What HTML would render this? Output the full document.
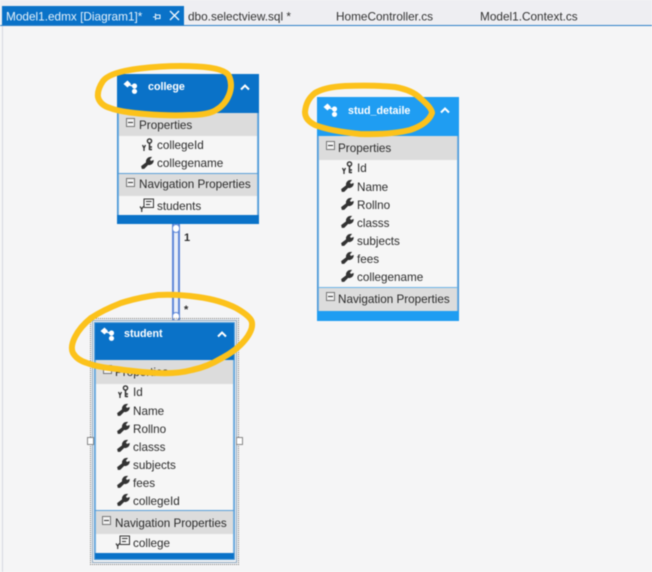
<!DOCTYPE html>
<html>
<head>
<meta charset="utf-8">
<style>
html,body{margin:0;padding:0;background:#f5f5f6}
#p{position:relative;width:652px;height:572px;overflow:hidden;background:#f5f5f6;font-family:"Liberation Sans",sans-serif;filter:blur(.4px)}
#p div{position:absolute;box-sizing:border-box}
.t{font-size:11.7px;line-height:16px;color:#2b2b2b;white-space:nowrap;transform:translateY(1px)}
.tab{font-size:11.8px;line-height:16px;color:#333;white-space:nowrap;top:8px;transform:translateY(.5px)}
.h{font-weight:bold;font-size:10.7px;line-height:14px;color:#fff;white-space:nowrap}
.s{background:#dcdcdc}
.m{width:9px;height:9px;border:1px solid #777;background:#f2f2f2}
.m:after{content:"";position:absolute;left:1px;top:3px;width:5px;height:1px;background:#333}
svg{position:absolute;overflow:visible}
</style>
</head>
<body>
<div id="p">
<svg width="0" height="0" style="left:0;top:0">
<defs>
<symbol id="w" viewBox="0 0 12 12"><path d="M1 11.5 L0.5 9.5 L5 6 C4.5 3.5 6.5 1 9.5 1.2 L7.8 3.2 L9 5 L11.4 4.2 C11.2 7 8.5 8.6 6.5 7.8 L2.8 11.5 Z" fill="#333" stroke="#333" stroke-width=".7"/></symbol>
<symbol id="k" viewBox="0 0 14 14"><circle cx="8.5" cy="3" r="2.1" fill="none" stroke="#333" stroke-width="1.4"/><path d="M8.5 5 V12 M8.5 9 H11 M8.5 11.5 H11" fill="none" stroke="#333" stroke-width="1.5"/><path d="M1.5 7 L3 10 L4.5 7 M3 9 V13" fill="none" stroke="#333" stroke-width="1.3"/></symbol>
<symbol id="n" viewBox="0 0 16 14"><path d="M5 9.5 V1 H14.5 V9.5 H5" fill="#f5f5f5" stroke="#333" stroke-width="1"/><path d="M7 3.5 H12.5 M7 6.5 H11" stroke="#333" stroke-width="1"/><path d="M1 8.5 L2.7 11 L4.4 8.5 M2.7 10 V14" fill="none" stroke="#333" stroke-width="1.2"/></symbol>
<symbol id="e" viewBox="0 0 16 14"><path d="M0.5 4 L4.5 0.5 L8 4 L4.5 7.5 Z" fill="#fff"/><circle cx="11.5" cy="6" r="2.6" fill="#fff"/><circle cx="11.5" cy="11.3" r="2.6" fill="#fff"/><path d="M6 5 L10 6" stroke="#fff" stroke-width="1.4"/></symbol>
<symbol id="c" viewBox="0 0 10 7"><path d="M1 5.5 L5 1.5 L9 5.5" fill="none" stroke="#fff" stroke-width="2"/></symbol>
</defs>
</svg>

<!-- tab strip -->
<div style="left:0;top:0;width:652px;height:25px;background:#eeeef2"></div>
<div style="left:2px;top:6px;width:182px;height:20px;background:#0a72c8"></div>
<div style="left:0;top:25px;width:652px;height:1px;background:#2d80c8"></div>
<div style="left:2px;top:26px;width:1px;height:546px;background:#d6d8e0"></div>
<div class="tab" style="left:6px;color:#e6f2fb">Model1.edmx [Diagram1]*</div>
<svg style="left:152px;top:12px" width="10" height="10" viewBox="0 0 10 10"><path d="M3.5 1.5 V8 M3.5 3 H8 V6.5 H3.5 M1 5 H3.5" fill="none" stroke="#e6f2fb" stroke-width="1.1"/></svg>
<svg style="left:169px;top:10px" width="11" height="11" viewBox="0 0 11 11"><path d="M1 1 L10 10 M10 1 L1 10" stroke="#eef6fc" stroke-width="1.4"/></svg>
<div class="tab" style="left:188px">dbo.selectview.sql *</div>
<div class="tab" style="left:336px">HomeController.cs</div>
<div class="tab" style="left:480px">Model1.Context.cs</div>

<!-- connector -->
<div style="left:172px;top:224px;width:8px;height:97px;background:#e8eef8;border-left:2px solid #5f88d8;border-right:2px solid #5f88d8"></div>
<div style="left:172px;top:224px;width:8px;height:9px;border:1.5px solid #5f88d8;border-radius:4px;background:#fff"></div>
<div style="left:172px;top:312px;width:8px;height:9px;border:1.5px solid #5f88d8;border-radius:4px;background:#fff"></div>
<div class="t" style="left:184px;top:230px;font-size:11px;font-weight:bold;line-height:14px">1</div>
<div class="t" style="left:184px;top:302px;font-size:11px;font-weight:bold;line-height:14px">*</div>

<!-- college -->
<div style="left:117px;top:74px;width:142px;height:150px;background:#0a72c8"></div>
<div style="left:117px;top:113px;width:142px;height:102px;background:#3c8fd4"></div>
<div style="left:118px;top:113px;width:140px;height:102px;background:#f6f6f6;border-left:1px solid #7ab4e2;border-right:1px solid #7ab4e2"></div>
<div style="left:119px;top:113px;width:138px;height:23px" class="s"></div>
<div style="left:118px;top:173px;width:140px;height:1px;background:#5a9fd8"></div>
<div style="left:119px;top:174px;width:138px;height:22px" class="s"></div>
<svg style="left:123px;top:80px" width="16" height="14"><use href="#e"/></svg>
<svg style="left:240px;top:84px" width="10" height="7"><use href="#c"/></svg>
<div class="h" style="left:148px;top:80px">college</div>
<div class="m" style="left:126px;top:118px"></div>
<div class="t" style="left:139px;top:117px">Properties</div>
<svg style="left:141px;top:138px" width="14" height="14"><use href="#k"/></svg>
<div class="t" style="left:157px;top:137px">collegeId</div>
<svg style="left:141px;top:156px" width="13" height="13"><use href="#w"/></svg>
<div class="t" style="left:157px;top:155px">collegename</div>
<div class="m" style="left:126px;top:178px"></div>
<div class="t" style="left:139px;top:176px">Navigation Properties</div>
<svg style="left:139px;top:198px" width="16" height="14"><use href="#n"/></svg>
<div class="t" style="left:157px;top:198px">students</div>

<!-- stud_detaile -->
<div style="left:317px;top:97px;width:142px;height:224px;background:#1f9df2"></div>
<div style="left:317px;top:136px;width:142px;height:175px;background:#3c8fd4"></div>
<div style="left:318px;top:136px;width:140px;height:175px;background:#f6f6f6;border-left:1px solid #7ab4e2;border-right:1px solid #7ab4e2"></div>
<div style="left:319px;top:136px;width:138px;height:24px" class="s"></div>
<div style="left:318px;top:287px;width:140px;height:1px;background:#6db4e8"></div>
<div style="left:319px;top:288px;width:138px;height:23px" class="s"></div>
<svg style="left:323px;top:103px" width="16" height="14"><use href="#e"/></svg>
<svg style="left:440px;top:107px" width="10" height="7"><use href="#c"/></svg>
<div class="h" style="left:348px;top:104px">stud_detaile</div>
<div class="m" style="left:326px;top:141px"></div>
<div class="t" style="left:338px;top:140px">Properties</div>
<svg style="left:341px;top:161px" width="14" height="14"><use href="#k"/></svg>
<div class="t" style="left:357px;top:160px">Id</div>
<svg style="left:341px;top:179px" width="13" height="13"><use href="#w"/></svg>
<div class="t" style="left:357px;top:179px">Name</div>
<svg style="left:341px;top:197px" width="13" height="13"><use href="#w"/></svg>
<div class="t" style="left:357px;top:197px">Rollno</div>
<svg style="left:341px;top:215px" width="13" height="13"><use href="#w"/></svg>
<div class="t" style="left:357px;top:215px">classs</div>
<svg style="left:341px;top:233px" width="13" height="13"><use href="#w"/></svg>
<div class="t" style="left:357px;top:233px">subjects</div>
<svg style="left:341px;top:251px" width="13" height="13"><use href="#w"/></svg>
<div class="t" style="left:357px;top:251px">fees</div>
<svg style="left:341px;top:269px" width="13" height="13"><use href="#w"/></svg>
<div class="t" style="left:357px;top:269px">collegename</div>
<div class="m" style="left:326px;top:292px"></div>
<div class="t" style="left:338px;top:291px">Navigation Properties</div>

<!-- student -->
<div style="left:90px;top:318px;width:149px;height:247px;border:1px dotted #777"></div>
<div style="left:92px;top:320px;width:145px;height:243px;border:1px solid #8fa8c0"></div>
<div style="left:94px;top:322px;width:141px;height:238px;background:#0a72c8;border:1px solid #5a9fd8"></div>
<div style="left:95px;top:360px;width:139px;height:193px;background:#f6f6f6;border-left:1px solid #7ab4e2;border-right:1px solid #7ab4e2"></div>
<div style="left:96px;top:360px;width:137px;height:24px" class="s"></div>
<div style="left:95px;top:510px;width:139px;height:1px;background:#5a9fd8"></div>
<div style="left:96px;top:511px;width:137px;height:23px" class="s"></div>
<svg style="left:100px;top:327px" width="16" height="14"><use href="#e"/></svg>
<svg style="left:217px;top:331px" width="10" height="7"><use href="#c"/></svg>
<div class="h" style="left:124px;top:327px">student</div>
<div class="m" style="left:103px;top:365px"></div>
<div class="t" style="left:115px;top:364px">Properties</div>
<svg style="left:117px;top:385px" width="14" height="14"><use href="#k"/></svg>
<div class="t" style="left:133px;top:384px">Id</div>
<svg style="left:117px;top:403px" width="13" height="13"><use href="#w"/></svg>
<div class="t" style="left:133px;top:403px">Name</div>
<svg style="left:117px;top:421px" width="13" height="13"><use href="#w"/></svg>
<div class="t" style="left:133px;top:421px">Rollno</div>
<svg style="left:117px;top:439px" width="13" height="13"><use href="#w"/></svg>
<div class="t" style="left:133px;top:439px">classs</div>
<svg style="left:117px;top:457px" width="13" height="13"><use href="#w"/></svg>
<div class="t" style="left:133px;top:457px">subjects</div>
<svg style="left:117px;top:475px" width="13" height="13"><use href="#w"/></svg>
<div class="t" style="left:133px;top:475px">fees</div>
<svg style="left:117px;top:493px" width="13" height="13"><use href="#w"/></svg>
<div class="t" style="left:133px;top:493px">collegeId</div>
<div class="m" style="left:102px;top:516px"></div>
<div class="t" style="left:115px;top:515px">Navigation Properties</div>
<svg style="left:115px;top:535px" width="16" height="14"><use href="#n"/></svg>
<div class="t" style="left:133px;top:535px">college</div>
<div style="left:87px;top:437px;width:7px;height:8px;background:#fff;border:1px solid #888"></div>
<div style="left:236px;top:437px;width:7px;height:8px;background:#fff;border:1px solid #888"></div>

<!-- highlighter -->
<svg style="left:0;top:0" width="652" height="572" viewBox="0 0 652 572" fill="none" stroke="#fcc21b" stroke-width="6" stroke-linejoin="round">
<path d="M140 68.5 Q170 65 197 66.5 Q225 68 229 76 Q233 85 229 95 Q225 105 216 110 Q208 115 189 115 Q170 116 145 114 Q120 112 110 108 Q100 105 98 97 Q97 90 103 81 Q110 72 140 68.5 Z"/>
<path d="M345 86 Q375 85 395 87 Q412 90 420 98 Q432 108 432 113 Q428 124 410 130 Q390 135 360 134 Q330 131 315 125 Q305 120 305 112 Q306 100 315 93 Q325 87 345 86 Z"/>
<path d="M121 303 Q140 297 158 295 Q177 294 198 297 Q220 300 236 308 Q252 317 252 323 Q253 330 245 340 Q237 350 222 358 Q207 367 192 370 Q177 374 157 373 Q137 372 117 369 Q97 367 87 363 Q77 360 73 353 Q70 347 75 337 Q80 327 91 318 Q103 310 121 303 Z"/>
</svg>
</div>
</body>
</html>
